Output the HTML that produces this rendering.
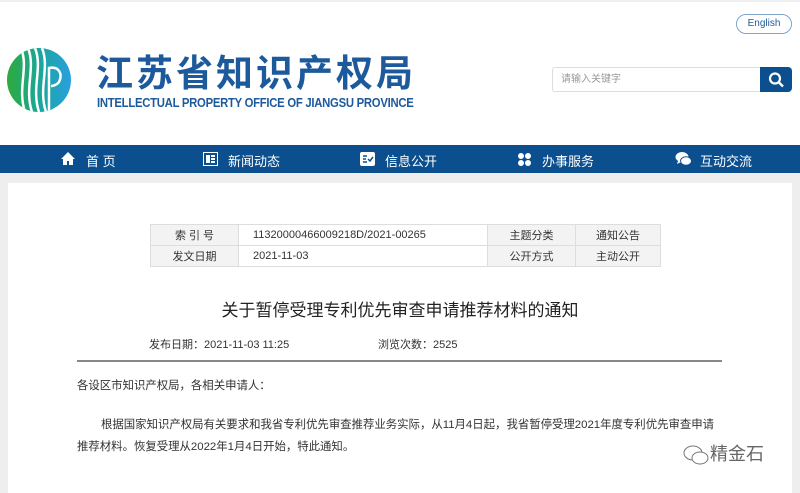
<!DOCTYPE html>
<html><head><meta charset="utf-8"><style>
*{margin:0;padding:0;box-sizing:border-box}
body{width:800px;height:486px;overflow:hidden;background:#eeeeee;font-family:"Liberation Sans","Noto Sans CJK SC",sans-serif;position:relative}
.hdr{position:absolute;left:0;top:0;width:800px;height:145px;background:#fff;border-top:2px solid #f0f0f0}
.nav{position:absolute;left:0;top:145px;width:800px;height:28px;background:#0b4f8f;color:#fff;font-size:13px}
.nav span{position:absolute;top:6px}
.panel{position:absolute;left:8px;top:183px;width:784px;height:310px;background:#fff}
table{position:absolute;left:150px;top:224px;border-collapse:collapse;font-size:11px;color:#333}
td{border:1px solid #ddd;height:21px;padding:0}
td.l{background:#f3f3f3;text-align:center}
.t{position:absolute;left:0;width:800px;top:296px;text-align:center;font-size:17px;color:#222}
.meta{position:absolute;top:336px;font-size:11px;color:#333}
.p{position:absolute;left:77px;font-size:11.4px;color:#333}
</style></head><body>
<div class="hdr"></div>
<svg style="position:absolute;left:7px;top:48px" width="64" height="64" viewBox="0 0 64 64">
<defs><linearGradient id="g" x1="0" x2="1"><stop offset="0" stop-color="#2eaa3a"/><stop offset="0.5" stop-color="#1aa79a"/><stop offset="1" stop-color="#2a9fe0"/></linearGradient><clipPath id="c"><circle cx="32" cy="32" r="32"/></clipPath></defs>
<circle cx="32" cy="32" r="32" fill="url(#g)"/>
<g clip-path="url(#c)" fill="none" stroke="#fff" stroke-width="2.5">
<path d="M14 0 C22 20 10 40 18 64"/><path d="M21 0 C29 20 17 40 25 64"/><path d="M28 0 C36 20 24 40 32 64"/><path d="M35 0 C43 20 31 40 39 64"/>
<path d="M42 64 L42 20 C52 18 56 26 52 34 C49 38 44 38 44 38"/></g></svg>
<div style="position:absolute;left:96px;top:46px;font-size:37px;font-weight:bold;color:#1d5a9c;letter-spacing:3px;font-family:'Noto Sans CJK SC',sans-serif;line-height:48px">江苏省知识产权局</div>
<div style="position:absolute;left:97px;top:96px;font-size:12.5px;font-weight:bold;color:#1d5a9c;letter-spacing:-0.3px;transform:scaleX(0.905);transform-origin:0 0;white-space:nowrap">INTELLECTUAL PROPERTY OFFICE OF JIANGSU PROVINCE</div>
<div style="position:absolute;left:736px;top:14px;width:56px;height:20px;border:1px solid #7fa6cc;border-radius:10px;font-size:10px;color:#1d5a9c;text-align:center;line-height:18px">English</div>
<div style="position:absolute;left:552px;top:67px;width:210px;height:25px;border:1px solid #ddd;border-radius:3px 0 0 3px;font-size:10px;color:#999;line-height:23px;padding-left:8px">请输入关键字</div>
<div style="position:absolute;left:760px;top:67px;width:32px;height:25px;background:#0b4f8f;border-radius:0 4px 4px 0"><svg width="32" height="25"><circle cx="15" cy="11.5" r="5" fill="none" stroke="#fff" stroke-width="2.2"/><path d="M19 15.5l4 4" stroke="#fff" stroke-width="2.4"/></svg></div>
<div class="nav">
<svg style="position:absolute;left:60px;top:6px" width="16" height="15"><path d="M8 1L1 8h2v6h4v-4h2v4h4V8h2z" fill="#fff"/></svg><span style="left:86px">首 页</span>
<svg style="position:absolute;left:203px;top:7px" width="15" height="14"><rect x="0.5" y="0.5" width="14" height="13" fill="none" stroke="#fff"/><rect x="3" y="3" width="4" height="8" fill="#fff"/><rect x="8" y="3" width="4" height="2" fill="#fff"/><rect x="8" y="6" width="4" height="2" fill="#fff"/><rect x="8" y="9" width="4" height="2" fill="#fff"/></svg><span style="left:228px">新闻动态</span>
<svg style="position:absolute;left:360px;top:7px" width="15" height="14"><rect width="15" height="14" rx="2" fill="#fff"/><path d="M3 4h4M3 7h3M3 10h4M8 7l2 2 3-4" stroke="#0b4f8f" stroke-width="1.5" fill="none"/></svg><span style="left:385px">信息公开</span>
<svg style="position:absolute;left:517px;top:7px" width="15" height="15"><circle cx="4" cy="4" r="3" fill="#fff"/><circle cx="11" cy="4" r="3" fill="#fff"/><circle cx="4" cy="11" r="3" fill="#fff"/><circle cx="11" cy="11" r="3" fill="#fff"/></svg><span style="left:542px">办事服务</span>
<svg style="position:absolute;left:675px;top:6px" width="17" height="16"><ellipse cx="7" cy="6" rx="6.5" ry="5" fill="#fff"/><ellipse cx="11" cy="10" rx="5.5" ry="4.3" fill="#fff" stroke="#0b4f8f"/><path d="M3 10l-1 3 4-2z" fill="#fff"/></svg><span style="left:700px">互动交流</span>
</div>
<div class="panel"></div>
<table>
<tr><td class="l" style="width:88px">索 引 号</td><td style="width:249px;padding-left:14px">11320000466009218D/2021-00265</td><td class="l" style="width:88px">主题分类</td><td class="l" style="width:85px">通知公告</td></tr>
<tr><td class="l">发文日期</td><td style="padding-left:14px">2021-11-03</td><td class="l">公开方式</td><td class="l">主动公开</td></tr>
</table>
<div class="t">关于暂停受理专利优先审查申请推荐材料的通知</div>
<div class="meta" style="left:149px">发布日期：2021-11-03 11:25</div>
<div class="meta" style="left:378px">浏览次数：2525</div>
<div style="position:absolute;left:77px;top:360px;width:645px;height:2px;background:#888"></div>
<div class="p" style="top:377px">各设区市知识产权局，各相关申请人：</div>
<div class="p" style="top:414px;text-indent:24px;width:660px;line-height:22px;white-space:nowrap">根据国家知识产权局有关要求和我省专利优先审查推荐业务实际，从11月4日起，我省暂停受理2021年度专利优先审查申请<br>推荐材料。恢复受理从2022年1月4日开始，特此通知。</div>
<div style="position:absolute;left:682px;top:440px;font-size:18px;color:#666">
<svg width="28" height="24" style="vertical-align:middle"><ellipse cx="11" cy="10" rx="9" ry="7" fill="none" stroke="#777"/><ellipse cx="18" cy="15" rx="8" ry="6" fill="#fff" stroke="#777"/></svg>精金石</div>
</body></html>
